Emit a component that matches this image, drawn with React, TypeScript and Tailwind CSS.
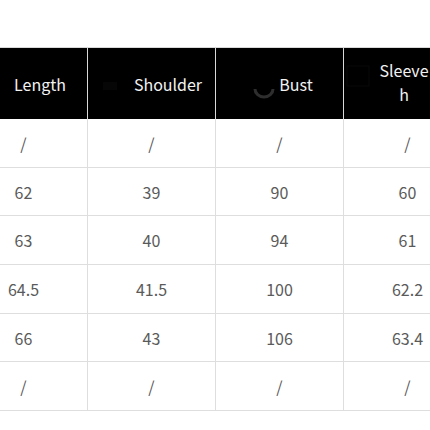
const HEADERS = ['Length', 'Shoulder', 'Bust', 'Sleeve'];

const ROWS = [
  ['/', '/', '/', '/'],
  ['62', '39', '90', '60'],
  ['63', '40', '94', '61'],
  ['64.5', '41.5', '100', '62.2'],
  ['66', '43', '106', '63.4'],
  ['/', '/', '/', '/'],
];

// faint leftover marks from the original header icons
function HeaderMark({ i }: { i: number }) {
  return (
    <svg width="33" height="40" viewBox="0 0 33 40" className="shrink-0">
      {i === 2 && <path d="M9 25 A9 8 0 0 0 27 25" fill="none" stroke="#2e2e2e" strokeWidth="3" />}
      {i === 3 && <rect x="3" y="2" width="22" height="20" fill="none" stroke="#090909" strokeWidth="1" />}
      {i === 1 && <rect x="2" y="18" width="14" height="8" fill="#060606" />}
    </svg>
  );
}

export default function App() {
  return (
    <div
      className="w-[430px] h-[430px] overflow-hidden bg-white pt-[47px]"
      style={{ fontFamily: '"Noto Sans CJK SC", "Noto Sans", sans-serif' }}
    >
      <div className="ml-[-40px] w-[512px] grid grid-cols-[128px_128px_128px_128px]">
        {HEADERS.map((h, i) => (
          <div
            key={h}
            className="h-[72px] bg-black border-t border-[#d9d9d9] border-r flex items-center justify-center text-[#f2f2f2] text-[16px]"
          >
            {i < 3 ? (
              <>
                <HeaderMark i={i} />
                <span>{h}</span>
              </>
            ) : (
              <div className="flex items-center w-full">
                <HeaderMark i={i} />
                <span className="w-[54px] text-center leading-[24px] -mt-[4px]">
                  Sleeve
                  <br />h
                </span>
              </div>
            )}
          </div>
        ))}
        {ROWS.map((row, r) =>
          row.map((v, c) => (
            <div
              key={`${r}-${c}`}
              className="h-[48.7px] border-r border-b border-[#dedede] flex items-center justify-center text-[16px] text-[#5a5a5a]"
            >
              {v}
            </div>
          )),
        )}
      </div>
    </div>
  );
}
